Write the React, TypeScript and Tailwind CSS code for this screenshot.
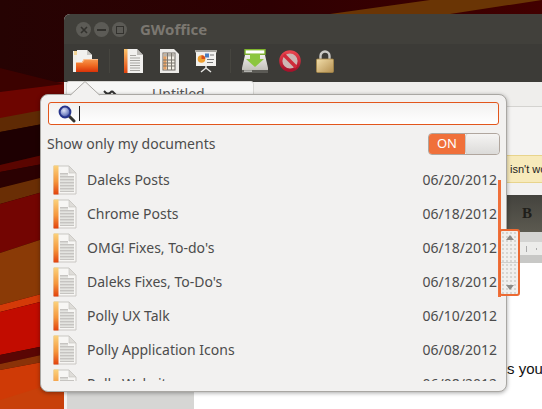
import React from "react";

const rows: [string, string][] = [
  ["Daleks Posts", "06/20/2012"],
  ["Chrome Posts", "06/18/2012"],
  ["OMG! Fixes, To-do's", "06/18/2012"],
  ["Daleks Fixes, To-Do's", "06/18/2012"],
  ["Polly UX Talk", "06/10/2012"],
  ["Polly Application Icons", "06/08/2012"],
  ["Polly Website", "06/08/2012"],
];

function Wallpaper() {
  return (
    <svg className="absolute inset-0" width="542" height="409" viewBox="0 0 542 409">
      <defs>
        <linearGradient id="top" x1="0" y1="0" x2="1" y2="0">
          <stop offset="0" stopColor="#260303" />
          <stop offset="0.5" stopColor="#2e0002" />
          <stop offset="1" stopColor="#420000" />
        </linearGradient>
      </defs>
      <rect width="542" height="409" fill="url(#top)" />
      <polygon points="330,14 430,0 542,0 450,14" fill="#6a3505" />
      <polygon points="0,86 64,82 64,108 0,120" fill="#6d0500" />
      <polygon points="0,68 64,84 0,92" fill="#3c0200" />
      <polygon points="0,118 64,106 64,120 0,132" fill="#5f2a04" />
      <polygon points="0,132 64,120 64,150 0,165" fill="#1e0002" />
      <polygon points="0,165 64,150 64,160 0,172" fill="#5a0500" />
      <polygon points="0,172 64,160 64,172 0,188" fill="#2b0102" />
      <polygon points="0,188 64,172 64,186 0,204" fill="#6a2e05" />
      <polygon points="0,204 64,186 64,232 0,253" fill="#730502" />
      <polygon points="0,253 64,232 64,288 0,305" fill="#8a3a06" />
      <polygon points="0,305 64,288 64,296 0,312" fill="#d43a08" />
      <polygon points="0,312 64,296 64,342 0,355" fill="#c20c00" />
      <polygon points="0,355 64,342 64,350 0,364" fill="#5a0604" />
      <polygon points="0,364 64,350 64,358 0,370" fill="#8a3208" />
      <polygon points="0,370 64,358 64,409 0,409" fill="#cf3a06" />
      <polygon points="0,409 0,400 64,380 64,409" fill="#c8400a" />
    </svg>
  );
}

function DocIcon({ className = "" }: { className?: string }) {
  return (
    <svg className={className} width="24" height="30" viewBox="0 0 24 30">
      <defs>
        <linearGradient id="spine" x1="0" y1="0" x2="0" y2="1">
          <stop offset="0" stopColor="#fbd27c" />
          <stop offset="0.55" stopColor="#f5963c" />
          <stop offset="1" stopColor="#e2410c" />
        </linearGradient>
      </defs>
      <path d="M1 1 H16 L23 8 V29 H1 Z" fill="#f7f6f4" stroke="#c9c7c3" strokeWidth="1" />
      <path d="M16 1 V8 H23 Z" fill="#dedcd8" stroke="#c9c7c3" strokeWidth="0.7" />
      <rect x="0.5" y="0.5" width="5" height="29" fill="url(#spine)" />
      {[8, 9.5, 11, 12.5, 14, 15.5, 17, 18.5, 20, 21.5, 23, 24.5, 26].map((y) => (
        <rect key={y} x="7" y={y} width={y < 10 ? 8 : 14} height="0.8" fill="#bab8b4" />
      ))}
    </svg>
  );
}

function FolderIcon() {
  return (
    <svg width="26" height="24" viewBox="0 0 26 24">
      <defs>
        <linearGradient id="fold" x1="0" y1="0" x2="0" y2="1">
          <stop offset="0" stopColor="#f79a50" />
          <stop offset="0.5" stopColor="#ef6a22" />
          <stop offset="1" stopColor="#d93208" />
        </linearGradient>
      </defs>
      <path d="M0 2 H8 V23 H0 Z" fill="#f1efe9" />
      <path d="M1 2 H6 V6 H1 Z" fill="#f4d79a" />
      <path d="M4 1 H14 L19 6 V15 H4 Z" fill="#f2f1ef" />
      <path d="M14 1 V6 H19 Z" fill="#c9c7c3" />
      <path d="M3 13 H9 L11 10 H25 V23 H3 Z" fill="url(#fold)" />
      <path d="M3 13 H9 L11 10 H25 V11 H11.5 L9.5 14 H3 Z" fill="#fbbd8c" />
    </svg>
  );
}

function LargeDoc() {
  return (
    <svg width="19" height="24" viewBox="0 0 19 24">
      <defs>
        <linearGradient id="spine2" x1="0" y1="0" x2="0" y2="1">
          <stop offset="0" stopColor="#fbc36b" />
          <stop offset="1" stopColor="#e2430c" />
        </linearGradient>
      </defs>
      <path d="M0 0 H13 L19 6 V24 H0 Z" fill="#f1f0ee" />
      <path d="M13 0 V6 H19 Z" fill="#bdbbb7" />
      <rect width="3.5" height="24" fill="url(#spine2)" />
      {[6, 8.5, 11, 13.5, 16, 18.5, 21].map((y) => (
        <rect key={y} x="6" y={y} width={y < 8 ? 6 : 10} height="1" fill="#a8a6a2" />
      ))}
    </svg>
  );
}

function SheetIcon() {
  return (
    <svg width="19" height="24" viewBox="0 0 19 24">
      <path d="M0 0 H14 L19 5 V24 H0 Z" fill="#ecebe8" />
      <rect x="3" y="4" width="12" height="17" fill="#f4f0e6" stroke="#6e6a64" strokeWidth="1" />
      <rect x="3.5" y="4.5" width="3" height="16" fill="#e8a060" />
      <rect x="3.5" y="4.5" width="11" height="3" fill="#b8b4ac" />
      {[10.5, 13.5, 16.5].map((y) => (
        <rect key={y} x="3" y={y} width="12" height="1" fill="#7b776f" />
      ))}
      <rect x="7" y="4" width="1" height="17" fill="#7b776f" />
      <rect x="11" y="4" width="1" height="17" fill="#7b776f" />
    </svg>
  );
}

function PresentationIcon() {
  return (
    <svg width="22" height="23" viewBox="0 0 22 23">
      <rect x="0" y="0" width="22" height="2.5" fill="#a8a6a0" />
      <rect x="1" y="2" width="20" height="14" fill="#f2f1ee" />
      <circle cx="6.5" cy="9" r="3.8" fill="#f0a030" />
      <path d="M6.5 9 L6.5 5.2 A3.8 3.8 0 0 1 10.3 9 Z" fill="#d8501c" />
      <rect x="10" y="3.5" width="4" height="4" fill="#4a7ec0" />
      <rect x="15" y="4.5" width="4" height="1" fill="#777" />
      <rect x="12" y="9" width="7" height="1" fill="#777" />
      <rect x="12" y="12" width="6" height="1" fill="#777" />
      <path d="M11 16 V19 M11 18 L6 22 M11 18 L16 22" stroke="#e6e5e2" strokeWidth="1.5" fill="none" />
    </svg>
  );
}

function DownloadIcon() {
  return (
    <svg width="26" height="25" viewBox="0 0 26 25">
      <defs>
        <linearGradient id="drive" x1="0" y1="0" x2="0" y2="1">
          <stop offset="0" stopColor="#f0efeb" />
          <stop offset="0.8" stopColor="#c4c2bc" />
          <stop offset="1" stopColor="#8a8983" />
        </linearGradient>
      </defs>
      <path d="M3 6 H23 L26 19 V24 H0 V19 Z" fill="url(#drive)" />
      <rect x="0" y="21" width="26" height="3" fill="#5b5a55" />
      <rect x="2" y="21.5" width="8" height="1.2" fill="#d8d8d4" />
      <rect x="3" y="0.7" width="20" height="4.5" fill="#fff" stroke="#7fb52c" strokeWidth="1.4" />
      <path d="M8 5 H18 V10 H22 L13 18 L4 10 H8 Z" fill="#8cc63f" />
    </svg>
  );
}

function NoIcon() {
  return (
    <svg width="22" height="22" viewBox="0 0 22 22">
      <defs>
        <linearGradient id="no" x1="0" y1="0" x2="0" y2="1">
          <stop offset="0" stopColor="#e8444e" />
          <stop offset="1" stopColor="#a8112a" />
        </linearGradient>
      </defs>
      <circle cx="11" cy="11" r="9.2" fill="#cdb6b4" stroke="url(#no)" strokeWidth="3.2" />
      <path d="M4.8 4.8 L17.2 17.2" stroke="#cf2b3a" strokeWidth="3.4" />
    </svg>
  );
}

function LockIcon() {
  return (
    <svg width="18" height="23" viewBox="0 0 18 23">
      <defs>
        <linearGradient id="lock" x1="0" y1="0" x2="1" y2="1">
          <stop offset="0" stopColor="#f2deaa" />
          <stop offset="1" stopColor="#b48f50" />
        </linearGradient>
      </defs>
      <path d="M4.5 10 V6 a4.5 4.5 0 0 1 9 0 V10" fill="none" stroke="#c9c8c4" strokeWidth="2.4" />
      <rect x="0.5" y="9" width="17" height="13.5" rx="1" fill="url(#lock)" stroke="#a58648" strokeWidth="0.8" />
    </svg>
  );
}

function SearchIcon() {
  return (
    <svg width="18" height="18" viewBox="0 0 18 18">
      <defs>
        <radialGradient id="glass" cx="0.4" cy="0.35" r="0.7">
          <stop offset="0" stopColor="#dfe4f6" />
          <stop offset="0.6" stopColor="#7d8cc8" />
          <stop offset="1" stopColor="#2b3a8e" />
        </radialGradient>
      </defs>
      <path d="M10.5 10.5 L16 16" stroke="#33332f" strokeWidth="3" strokeLinecap="round" />
      <circle cx="7" cy="7" r="5.4" fill="url(#glass)" stroke="#27358c" strokeWidth="2" />
    </svg>
  );
}

function Controls() {
  return (
    <div className="flex items-center gap-[3px]">
      <span className="flex h-[15px] w-[15px] items-center justify-center rounded-full bg-[#5c5b56]">
        <svg width="8" height="8" viewBox="0 0 8 8">
          <path d="M1 1 L7 7 M7 1 L1 7" stroke="#33322e" strokeWidth="1.6" />
        </svg>
      </span>
      <span className="flex h-[15px] w-[15px] items-center justify-center rounded-full bg-[#5c5b56]">
        <span className="h-[2px] w-[9px] bg-[#33322e]" />
      </span>
      <span className="flex h-[15px] w-[15px] items-center justify-center rounded-full bg-[#5c5b56]">
        <span className="h-[8px] w-[8px] border border-[#33322e]" />
      </span>
    </div>
  );
}

export default function App() {
  return (
    <div className="relative h-[409px] w-[542px] overflow-hidden font-['Noto_Sans','Open_Sans',sans-serif]">
      <Wallpaper />

      {/* application window */}
      <div className="absolute left-[64px] top-[14px] flex h-[395px] w-[478px] flex-col overflow-hidden rounded-tl-[6px] bg-[#f2f1f0]">
        <div className="flex h-[30px] shrink-0 items-center gap-[13px] bg-[#41403b] pl-[12px] pt-[1px]">
          <Controls />
          <span className="text-[15px] font-bold text-[#7b7770]">GWoffice</span>
        </div>
        <div className="flex h-[38px] shrink-0 items-center bg-[#3c3b37] pb-[4px] pl-[9px]">
          <FolderIcon />
          <span className="ml-[10px] h-[24px] w-px bg-[#46453f]" />
          <span className="ml-[14px]"><LargeDoc /></span>
          <span className="ml-[17px]"><SheetIcon /></span>
          <span className="ml-[16px]"><PresentationIcon /></span>
          <span className="ml-[13px] h-[24px] w-px bg-[#46453f]" />
          <span className="ml-[11px]"><DownloadIcon /></span>
          <span className="ml-[11px]"><NoIcon /></span>
          <span className="ml-[15px]"><LockIcon /></span>
        </div>
        <div className="flex h-[25px] shrink-0 items-end border-b border-[#d4d3d0] bg-[#efeeec]">
          <div className="ml-[2px] flex h-[25px] w-[188px] items-start rounded-t-[3px] border border-[#d8d7d4] bg-[#f7f7f6] pl-[36px] pt-[1px] text-[14px] text-[#555]">
            <svg className="mt-[7px]" width="14" height="8" viewBox="0 0 14 8">
              <path d="M1 1 L5 5 L9 1 M1 7 L5 3 M9 7 L5 3 M9 1 L13 5" stroke="#333" strokeWidth="2" fill="none" />
            </svg>
            <span className="ml-[35px]">Untitled</span>
          </div>
        </div>
        <div className="h-[48px] shrink-0 bg-[#f4f3f2]" />
        <div className="flex h-[28px] shrink-0 items-center border-y border-[#e8d48c] bg-[#f7eabb] pl-[446px] text-[11px] whitespace-nowrap text-[#222] font-['Liberation_Sans',sans-serif]">
          isn't working
        </div>
        <div className="h-[12px] shrink-0 bg-[#f2f1f0]" />
        <div className="flex h-[37px] shrink-0 items-center bg-[linear-gradient(#44433e,#5c5a50)] pl-[458px] font-['Liberation_Serif',serif] text-[15px] font-bold text-[#1f1e1a]">
          B
        </div>
        <div className="h-[10px] shrink-0 bg-[#d4d4d2]" />
        <div className="flex h-[13px] shrink-0 items-center gap-[9px] bg-[#ececea] pl-[452px]">
          <span className="h-[2px] w-px bg-[#aaa]" />
          <span className="h-[6px] w-px bg-[#aaa]" />
          <span className="h-[2px] w-px bg-[#aaa]" />
        </div>
        <div className="h-[8px] shrink-0 bg-[#c8c8c6]" />
        <div className="flex min-h-0 flex-1">
          <div className="ml-[3px] w-[127px] shrink-0 bg-[#d6d6d4]" />
          <div className="flex-1 bg-white pl-[313px] pt-[95px] font-['Liberation_Sans',sans-serif] text-[15px] whitespace-nowrap text-[#111]">
            s you
          </div>
        </div>
      </div>

      {/* popover */}
      <div className="absolute left-[40px] top-[94px] h-[298px] w-[467px] rounded-[8px] border border-[#a9a7a3] bg-[#f2f1f0] shadow-[0_1px_4px_rgba(0,0,0,0.35)]">
        <svg className="absolute left-[29px] top-[-14px]" width="30" height="15" viewBox="0 0 30 15">
          <path d="M0.5 14 L15 0.5 L29.5 14" fill="#f2f1f0" stroke="#a9a7a3" strokeWidth="1" />
          <rect x="1" y="14" width="28" height="1" fill="#f2f1f0" />
        </svg>

        <div className="mx-[7px] mt-[7px] flex h-[23px] items-center rounded-[3px] border border-[#e2561c] bg-[linear-gradient(#f2f1f0,#ffffff)] pl-[9px]">
          <SearchIcon />
          <span className="ml-[3px] h-[15px] w-px bg-[#222]" />
        </div>

        <div className="mt-[8px] flex h-[22px] items-center justify-between pl-[6px] pr-[6px]">
          <span className="pb-[2px] text-[14px] text-[#4c4c4c]">Show only my documents</span>
          <div className="flex h-[22px] w-[72px] overflow-hidden rounded-[4px] border border-[#b0a69e] text-[13px] text-white">
            <span className="flex w-[36px] items-center justify-center bg-[#f0703a]">ON</span>
            <span className="flex-1 rounded-[3px] border-l border-[#c8c6c3] bg-[linear-gradient(#f5f4f3,#dcdbd9)]" />
          </div>
        </div>

        <div className="mt-[7px] h-[219px] overflow-hidden pl-[12px] pr-[9px]">
          {rows.map(([name, date], i) => (
            <div key={i} className="flex h-[34px] shrink-0 items-center text-[14px] text-[#4c4c4c]">
              <DocIcon className="mt-[2px]" />
              <span className="ml-[10px] flex-1">{name}</span>
              <span>{date}</span>
            </div>
          ))}
        </div>

        {/* overlay scrollbar */}
        <div className="absolute left-[457px] top-[85px] h-[117px] w-[3px] bg-[#f0703a]" />
        <div className="absolute left-[458px] top-[134px] flex h-[67px] w-[21px] flex-col rounded-[3px] border-2 border-[#ec6a32] bg-[#f0efed] bg-[radial-gradient(#d6d5d1_0.7px,transparent_0.9px)] bg-[length:4px_4px]">
          <div className="flex h-1/2 justify-center border-b border-[#cfcecb] pt-[4px]">
            <span className="h-0 w-0 border-x-[4px] border-b-[5px] border-x-transparent border-b-[#8b8a86]" />
          </div>
          <div className="flex h-1/2 items-end justify-center pb-[4px]">
            <span className="h-0 w-0 border-x-[4px] border-t-[5px] border-x-transparent border-t-[#8b8a86]" />
          </div>
        </div>
      </div>
    </div>
  );
}
